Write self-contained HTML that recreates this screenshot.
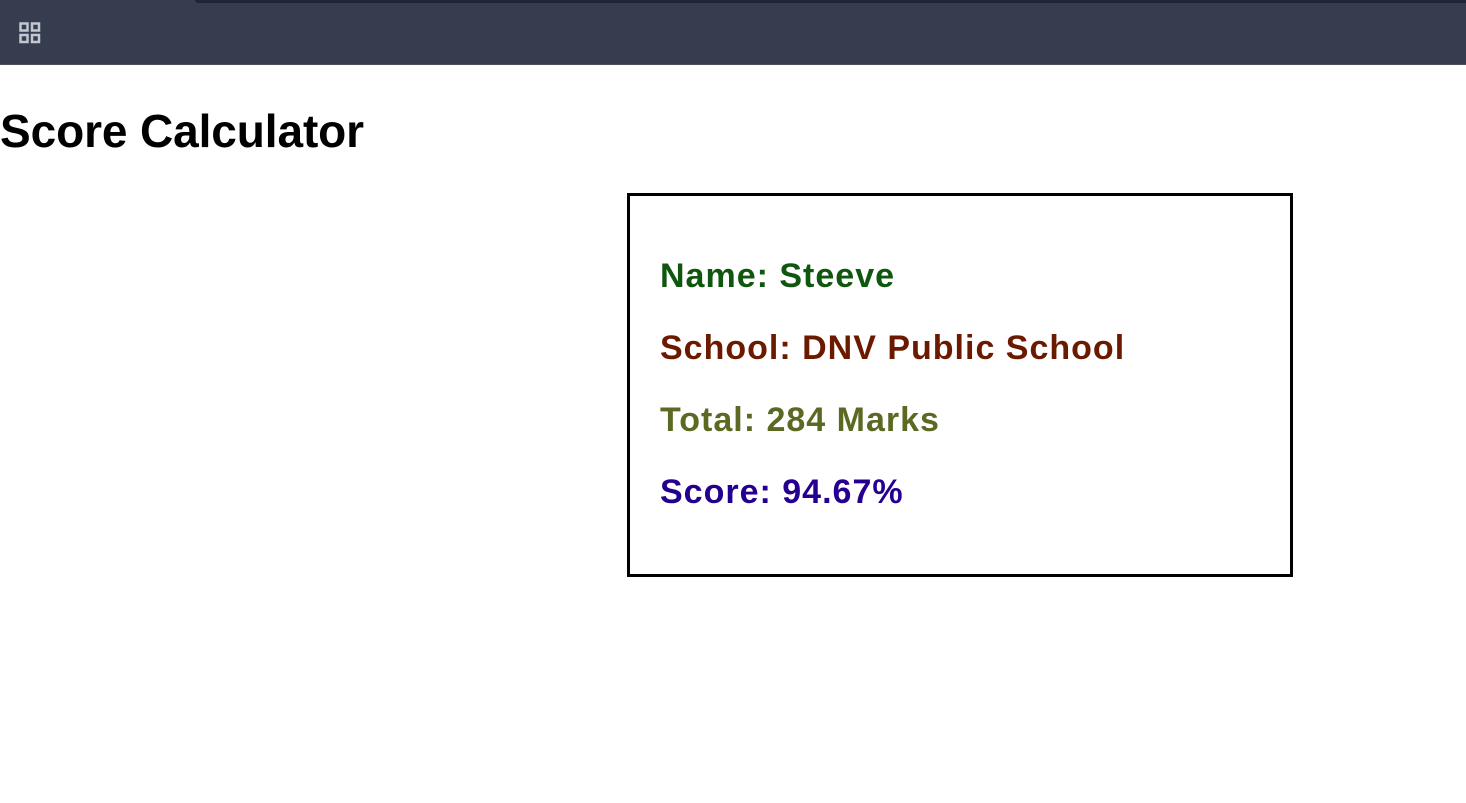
<!DOCTYPE html>
<html><head><style>
body{margin:0;width:1466px;height:803px;background:#fff;position:relative;overflow:hidden;font-family:"Liberation Sans",Arial,sans-serif}
.bar{position:absolute;left:0;top:0;width:1466px;height:64px;background:#353d4e;border-bottom:1px solid #4a5060}
.tab{position:absolute;left:195px;top:0;right:0;height:3px;background:#1f2637;border-bottom-left-radius:8px}
.ic{position:absolute;left:19px;top:22px;width:22px;height:22px}
h1{position:absolute;left:0;top:105px;margin:0;font-size:46px;font-weight:bold;color:#000;line-height:52px;letter-spacing:-0.1px}
.box{position:absolute;left:627px;top:193px;width:660px;height:378px;border:3px solid #000}
.l{position:absolute;left:30px;font-size:34px;letter-spacing:1px;font-weight:bold;white-space:nowrap;line-height:36px}
</style></head><body>
<div class="bar"><div class="tab"></div>
<svg class="ic" viewBox="0 0 22 22"><g fill="none" stroke="#c4c7d0" stroke-width="2.5"><rect x="1.5" y="1.5" width="7" height="7"/><rect x="13" y="1.5" width="7" height="7"/><rect x="1.5" y="13" width="7" height="7"/><rect x="13" y="13" width="7" height="7"/></g></svg>
</div>
<h1>Score Calculator</h1>
<div class="box">
<div class="l" style="top:62px;color:#0f560f">Name: Steeve</div>
<div class="l" style="top:134px;color:#6b1a00">School: DNV Public School</div>
<div class="l" style="top:206px;color:#5a6a23">Total: 284 Marks</div>
<div class="l" style="top:278px;color:#250090">Score: 94.67%</div>
</div>
</body></html>
